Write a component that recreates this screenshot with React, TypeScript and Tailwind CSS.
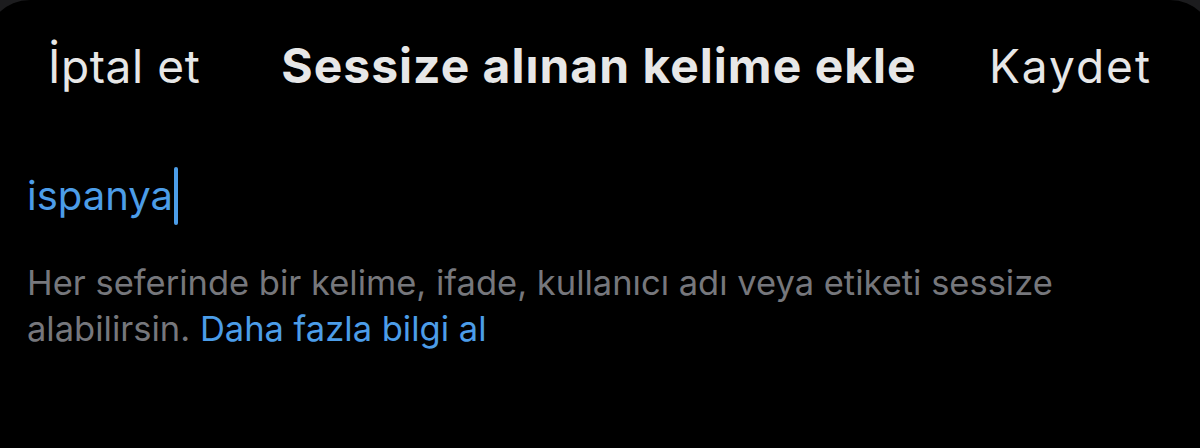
import React from "react";

export default function App() {
  return (
    <div className="w-[1200px] h-[448px] bg-[#1c1c1e] overflow-hidden" style={{ fontFamily: "Inter, 'Noto Sans', sans-serif" }}>
      <div className="-mx-[14px] h-[470px] bg-black rounded-t-[44px] px-[14px]">
        <div className="grid grid-cols-[1fr_auto_1fr] items-baseline pl-[48px] pr-[50px] pt-[40px] pb-[12px]">
          <span className="justify-self-start text-[46px] leading-[52px] text-[#e7e7e7] tracking-[0.6px]">İptal et</span>
          <span className="text-[48px] leading-[52px] font-bold text-[#e7e7e7] tracking-[1px]">Sessize alınan kelime ekle</span>
          <span className="justify-self-end text-[46px] leading-[52px] text-[#e7e7e7] tracking-[2px] -mr-[2px]">Kaydet</span>
        </div>
        <div className="pl-[27px] pt-[62px]">
          <div className="flex items-center h-[60px]">
            <span className="text-[40px] leading-[48px] text-[#4c9de8]">ispanya</span>
            <span className="w-[4px] h-[58px] bg-[#4c9de8] rounded-full ml-[1px]"></span>
          </div>
          <p className="mt-[34px] max-w-[1070px] text-[34.5px] leading-[46px] text-[#76777c]">
            Her seferinde bir kelime, ifade, kullanıcı adı veya etiketi sessize alabilirsin.{" "}
            <span className="text-[#4c9de8]">Daha fazla bilgi al</span>
          </p>
        </div>
      </div>
    </div>
  );
}
